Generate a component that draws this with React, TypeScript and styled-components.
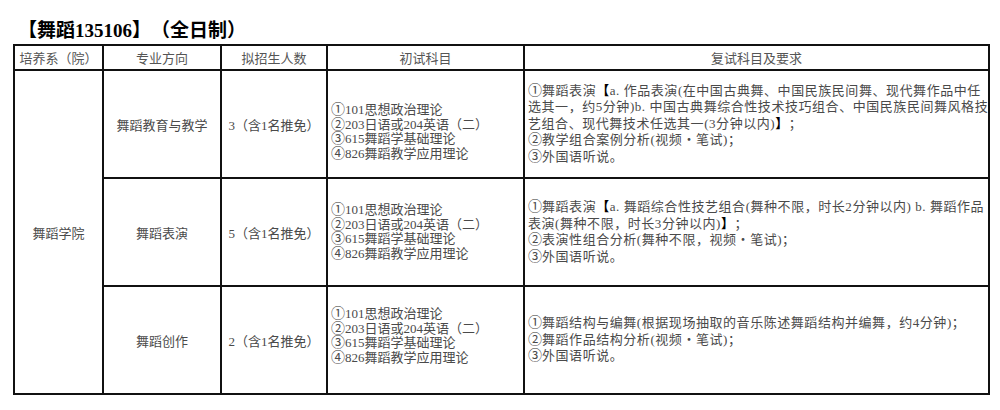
import React from 'react';
import styled, { createGlobalStyle } from 'styled-components';

const GlobalStyle = createGlobalStyle`
  html, body {
    margin: 0;
    padding: 0;
    background: #fff;
  }
  body {
    font-family: "Liberation Serif", "Noto Sans CJK SC", serif;
    color: #4a4a4a;
    text-spacing-trim: space-all;
  }
`;

const Page = styled.div`
  width: 1000px;
  height: 410px;
  padding: 20px 0 0 13px;
  box-sizing: border-box;
  overflow: hidden;
`;

const Title = styled.div`
  height: 24px;
  line-height: 22px;
  padding-left: 5px;
  font-size: 19px;
  font-weight: 700;
  color: #000;
  white-space: nowrap;
`;

const Table = styled.table`
  width: 975px;
  table-layout: fixed;
  border-collapse: collapse;
  border: 2px solid #111;
  font-size: 13px;
`;

const HeadRow = styled.tr`
  height: 25px;
`;

const HeadCell = styled.th`
  border: 2px solid #111;
  padding: 0;
  font-weight: 400;
  color: #555;
  text-align: center;
  vertical-align: middle;
  white-space: nowrap;
`;

const BodyRow = styled.tr`
  height: 108px;
`;

const Cell = styled.td`
  border: 2px solid #111;
  padding: 0;
  text-align: center;
  vertical-align: middle;
  white-space: nowrap;
`;

/* shift moves the text block down (positive) or up (negative) within the cell */
const ListCell = styled(Cell)<{ $shift?: number }>`
  text-align: left;
  padding-left: 3px;
  padding-top: ${(p) => Math.max(0, (p.$shift ?? 0) * 2)}px;
  padding-bottom: ${(p) => Math.max(0, -(p.$shift ?? 0) * 2)}px;
`;

const PrelimLine = styled.div`
  line-height: 14.5px;
  white-space: nowrap;
`;

const RetestLine = styled.div`
  line-height: 16.5px;
  letter-spacing: 0.55px;
  white-space: nowrap;
`;

const Circled = styled.span`
  font-family: "Noto Sans CJK SC", sans-serif;
  font-size: 14px;
  line-height: 1px;
  letter-spacing: 0;
`;

const Bracket = styled.span`
  font-weight: 700;
  color: #000;
`;

type Line = { n: string; body: React.ReactNode };

type Major = {
  name: string;
  quota: string;
  shift: number;
  retest: Line[];
};

const prelim: Line[] = [
  { n: '①', body: '101思想政治理论' },
  { n: '②', body: '203日语或204英语（二）' },
  { n: '③', body: '615舞蹈学基础理论' },
  { n: '④', body: '826舞蹈教学应用理论' },
];

const majors: Major[] = [
  {
    name: '舞蹈教育与教学',
    quota: '3（含1名推免）',
    shift: 8,
    retest: [
      { n: '①', body: <>舞蹈表演<Bracket>【</Bracket>a. 作品表演(在中国古典舞、中国民族民间舞、现代舞作品中任</> },
      { n: '', body: '选其一，约5分钟)b. 中国古典舞综合性技术技巧组合、中国民族民间舞风格技' },
      { n: '', body: <>艺组合、现代舞技术任选其一(3分钟以内)<Bracket>】</Bracket>；</> },
      { n: '②', body: '教学组合案例分析(视频・笔试)；' },
      { n: '③', body: '外国语听说。' },
    ],
  },
  {
    name: '舞蹈表演',
    quota: '5（含1名推免）',
    shift: 0,
    retest: [
      { n: '①', body: <>舞蹈表演<Bracket>【</Bracket>a. 舞蹈综合性技艺组合(舞种不限，时长2分钟以内) b. 舞蹈作品</> },
      { n: '', body: <>表演(舞种不限，时长3分钟以内)<Bracket>】</Bracket>；</> },
      { n: '②', body: '表演性组合分析(舞种不限，视频・笔试)；' },
      { n: '③', body: '外国语听说。' },
    ],
  },
  {
    name: '舞蹈创作',
    quota: '2（含1名推免）',
    shift: -4,
    retest: [
      { n: '①', body: '舞蹈结构与编舞(根据现场抽取的音乐陈述舞蹈结构并编舞，约4分钟)；' },
      { n: '②', body: '舞蹈作品结构分析(视频・笔试)；' },
      { n: '③', body: '外国语听说。' },
    ],
  },
];

export default function App() {
  return (
    <Page>
      <GlobalStyle />
      <Title>【舞蹈135106】（全日制）</Title>
      <Table>
        <colgroup>
          <col style={{ width: 89 }} />
          <col style={{ width: 118 }} />
          <col style={{ width: 106 }} />
          <col style={{ width: 197 }} />
          <col style={{ width: 465 }} />
        </colgroup>
        <thead>
          <HeadRow>
            <HeadCell>培养系（院）</HeadCell>
            <HeadCell>专业方向</HeadCell>
            <HeadCell>拟招生人数</HeadCell>
            <HeadCell>初试科目</HeadCell>
            <HeadCell>复试科目及要求</HeadCell>
          </HeadRow>
        </thead>
        <tbody>
          {majors.map((m, i) => (
            <BodyRow key={m.name}>
              {i === 0 && <Cell rowSpan={3}>舞蹈学院</Cell>}
              <Cell>{m.name}</Cell>
              <Cell>{m.quota}</Cell>
              <ListCell $shift={m.shift}>
                {prelim.map((p) => (
                  <PrelimLine key={p.n}>
                    <Circled>{p.n}</Circled>
                    {p.body}
                  </PrelimLine>
                ))}
              </ListCell>
              <ListCell>
                {m.retest.map((r, j) => (
                  <RetestLine key={j}>
                    {r.n && <Circled>{r.n}</Circled>}
                    {r.body}
                  </RetestLine>
                ))}
              </ListCell>
            </BodyRow>
          ))}
        </tbody>
      </Table>
    </Page>
  );
}
